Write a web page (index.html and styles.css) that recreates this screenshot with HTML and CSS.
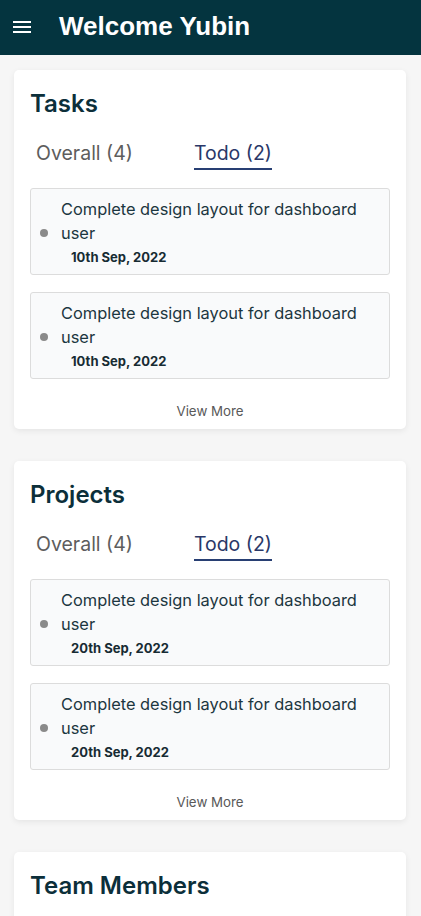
FILE: index.html
```html
<!DOCTYPE html>
<html>
<head>
<meta charset="utf-8">
<link rel="stylesheet" href="styles.css">
</head>
<body>
<header class="topbar">
  <span class="burger"><i></i><i></i><i></i></span>
  <h1 class="welcome">Welcome Yubin</h1>
</header>
<main class="content">
  <section class="card">
    <h2 class="card-title">Tasks</h2>
    <div class="tabs">
      <span class="tab">Overall (4)</span>
      <span class="tab active">Todo (2)</span>
    </div>
    <div class="list">
      <div class="item">
        <span class="dot"></span>
        <div class="item-body">
          <p class="item-text">Complete design layout for dashboard user</p>
          <p class="item-date">10th Sep, 2022</p>
        </div>
      </div>
      <div class="item">
        <span class="dot"></span>
        <div class="item-body">
          <p class="item-text">Complete design layout for dashboard user</p>
          <p class="item-date">10th Sep, 2022</p>
        </div>
      </div>
    </div>
    <div class="more">View More</div>
  </section>
  <section class="card">
    <h2 class="card-title">Projects</h2>
    <div class="tabs">
      <span class="tab">Overall (4)</span>
      <span class="tab active">Todo (2)</span>
    </div>
    <div class="list">
      <div class="item">
        <span class="dot"></span>
        <div class="item-body">
          <p class="item-text">Complete design layout for dashboard user</p>
          <p class="item-date">20th Sep, 2022</p>
        </div>
      </div>
      <div class="item">
        <span class="dot"></span>
        <div class="item-body">
          <p class="item-text">Complete design layout for dashboard user</p>
          <p class="item-date">20th Sep, 2022</p>
        </div>
      </div>
    </div>
    <div class="more">View More</div>
  </section>
  <section class="card">
    <h2 class="card-title">Team Members</h2>
    <div class="spacer"></div>
  </section>
</main>
</body>
</html>
```
FILE: styles.css
```css
* { box-sizing: border-box; }
html, body { margin: 0; padding: 0; }
body {
  background: #f6f6f6;
  font-family: Inter, "Noto Sans", sans-serif;
  color: #12303a;
}
.topbar {
  height: 55px;
  background: #04343f;
  display: flex;
  align-items: center;
  padding-left: 13px;
}
.burger {
  width: 18px;
  display: flex;
  flex-direction: column;
  gap: 3px;
  margin-top: -2px;
}
.burger i {
  display: block;
  height: 2px;
  background: #fff;
}
.welcome {
  margin: -3px 0 0 28px;
  font-family: "Liberation Sans", Arial, sans-serif;
  font-weight: 700;
  font-size: 26px;
  color: #fff;
}
.content {
  padding: 15px 15px 0 14px;
  display: flex;
  flex-direction: column;
  gap: 32px;
}
.card {
  background: #fff;
  border-radius: 5px;
  box-shadow: 0 2px 6px rgba(0,0,0,0.07);
  padding: 19px 16px 10px 16px;
}
.card-title {
  margin: 0;
  font-size: 24px;
  font-weight: 600;
  color: #0c2f3a;
  line-height: 30px;
}
.tabs {
  display: flex;
  margin-top: 22px;
  padding-left: 6px;
  gap: 61px;
}
.tab {
  font-size: 19.5px;
  color: #5d5d5d;
  line-height: 24px;
  padding-bottom: 3px;
}
.tab.active {
  color: #2a3868;
  border-bottom: 2px solid #283f73;
}
.list {
  margin-top: 18px;
  display: flex;
  flex-direction: column;
  gap: 17px;
}
.item {
  background: #f9fafb;
  border: 1px solid #dcdcdc;
  border-radius: 3px;
  display: flex;
  align-items: center;
  padding: 8px 10px 7px 9px;
}
.dot {
  width: 8px;
  height: 8px;
  border-radius: 50%;
  background: #8a8a8a;
  flex: none;
  margin-top: 2px;
}
.item-body { margin-left: 13px; }
.item-text {
  margin: 0;
  font-size: 16.4px;
  line-height: 24px;
  color: #1c3640;
}
.item-date {
  margin: 2px 0 0 10px;
  font-size: 13px;
  font-weight: 700;
  color: #172b33;
  line-height: 20px;
}
.more {
  text-align: center;
  font-size: 13.3px;
  color: #595959;
  margin-top: 24px;
  line-height: 16px;
}
.spacer { height: 40px; }
```
